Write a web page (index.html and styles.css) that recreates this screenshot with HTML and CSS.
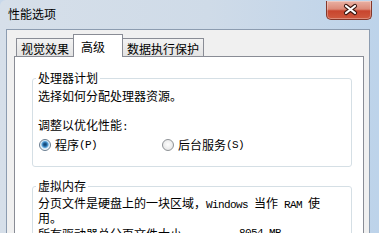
FILE: index.html
```html
<!DOCTYPE html>
<html lang="zh-CN">
<head>
  <meta charset="UTF-8">
  <title>性能选项</title>
  <link rel="stylesheet" href="styles.css">
</head>

<body>
<div class="window">
  <div class="titlebar">
    <span class="title">性能选项</span>
    <button class="close" aria-label="关闭">
      <svg width="46" height="18" viewBox="0 0 46 18">
        <path d="M19 5 L28 12 M28 5 L19 12" stroke="#3b1710" stroke-width="4.2" stroke-linecap="round"/>
        <path d="M19 5 L28 12 M28 5 L19 12" stroke="#fff" stroke-width="2.2" stroke-linecap="round"/>
      </svg>
    </button>
  </div>

  <div class="client">
    <div class="tabs">
      <div class="tab">视觉效果</div>
      <div class="tab active">高级</div>
      <div class="tab">数据执行保护</div>
    </div>

    <div class="panel">
      <fieldset class="group">
        <legend>处理器计划</legend>
        <p class="desc">选择如何分配处理器资源。</p>
        <p class="label">调整以优化性能<span class="en">:</span></p>
        <div class="options">
          <label class="option"><span class="radio checked"></span>程序<span class="en">(P)</span></label>
          <label class="option"><span class="radio"></span>后台服务<span class="en">(S)</span></label>
        </div>
      </fieldset>

      <fieldset class="group second">
        <legend>虚拟内存</legend>
        <p class="desc wrap">分页文件是硬盘上的一块区域，<span class="en">Windows </span>当作<span class="en"> RAM </span>使<br>用。</p>
        <div class="total">
          <span>所有驱动器总分页文件大小<span class="en">:</span></span>
          <span class="en">8054 MB</span>
        </div>
      </fieldset>
    </div>
  </div>
</div>
</body>
</html>
```

FILE: styles.css
```css
* {
  box-sizing: border-box;
}

body {
  margin: 0;
  font-family: "Noto Sans CJK SC", "Noto Sans", sans-serif;
  font-size: 12px;
  color: #000;
  background: #c8d8ea;
}

.window {
  width: 379px;
  height: 233px;
  overflow: hidden;
  border-radius: 6px 6px 0 0;
  background: linear-gradient(to right, #d6dfe9 0%, #cfdbe8 55%, #bdd3ea 100%);
}

/* title bar */
.titlebar {
  display: flex;
  align-items: flex-start;
  height: 29px;
}

.title {
  padding: 7px 0 0 8px;
  line-height: 14px;
}

.close {
  display: block;
  margin: 1px 7px 0 auto;
  padding: 0;
  width: 46px;
  height: 19px;
  border: 1px solid #84372a;
  border-top: 0;
  border-radius: 0 0 5px 5px;
  background: linear-gradient(#e9b1a4 0%, #dc8a78 45%, #c8452e 55%, #cf5a3f 100%);
  box-shadow: inset 0 0 0 1px rgba(255, 255, 255, 0.3);
}

.close svg {
  display: block;
}

/* client area */
.client {
  margin: 0 9px 0 6px;
  height: 204px;
  padding: 4px 5px 0 7px;
  border: 1px solid #8c9cb0;
  border-bottom: 0;
  background: #f0f0f0;
}

.tabs {
  position: relative;
  z-index: 1;
  display: flex;
  align-items: flex-end;
  height: 23px;
  margin-bottom: -1px;
  padding-left: 2px;
}

.tab {
  height: 18px;
  margin-bottom: 1px;
  margin-left: -1px;
  padding: 2px 4px 0;
  line-height: 15px;
  white-space: nowrap;
  border: 1px solid #898c95;
  border-bottom: 0;
  background: linear-gradient(#f3f3f3, #e3e3e3);
}

.tab:first-child {
  margin-left: 0;
}

.tab.active {
  height: 23px;
  margin-bottom: 0;
  padding: 4px 17px 0 7px;
  line-height: 16px;
  background: #fff;
}

.panel {
  height: 180px;
  padding: 14px 11px 0 17px;
  border: 1px solid #898c95;
  border-bottom: 0;
  background: #fff;
}

/* group boxes */
.group {
  margin: 0;
  min-width: 0;
  padding: 0 5px 14px;
  border: 1px solid #d5dfe5;
  border-radius: 3px;
}

.group.second {
  margin-top: 12px;
}

.group legend {
  margin-left: -2px;
  padding: 0 2px;
  line-height: 14px;
}

.desc,
.label {
  margin: 4px 0 0;
  line-height: 14px;
}

.label {
  margin-top: 15px;
}

.desc.wrap {
  margin-top: 3px;
  line-height: 13px;
  white-space: nowrap;
}

.en {
  font-family: "Liberation Mono", monospace;
  font-size: 11px;
  letter-spacing: -0.6px;
  line-height: 1;
}

.options {
  display: flex;
  margin-top: 5px;
  line-height: 14px;
}

.option {
  display: flex;
  align-items: center;
}

.option:first-child {
  width: 124px;
  padding-left: 1px;
}

.radio {
  width: 12px;
  height: 12px;
  margin-right: 4px;
  border: 1px solid #8e9296;
  border-radius: 50%;
  background: radial-gradient(circle at 50% 45%, #fdfdfd 0, #ececec 60%, #dcdcdc 100%);
}

.radio.checked {
  border-color: #6a7d90;
  background: radial-gradient(circle at 50% 45%, #123c66 0, #1f5f96 1.6px, #5aa4dc 3px, #cfe6f6 4px, #f4f8fb 5px);
}

.total {
  display: grid;
  grid-template-columns: 201px auto;
  margin-top: 4px;
  line-height: 12px;
}
```
